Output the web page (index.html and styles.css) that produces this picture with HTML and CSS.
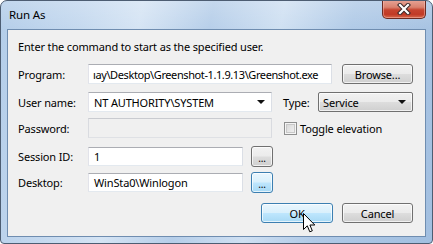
FILE: index.html
```html
<!DOCTYPE html>
<html>
<head>
<meta charset="utf-8">
<link rel="stylesheet" href="styles.css">
</head>
<body>
<div class="window">
  <div class="titlebar">
    <span class="title">Run As</span>
    <div class="close">
      <svg width="14" height="12" viewBox="0 0 14 12">
        <path d="M3 2 L11 10 M11 2 L3 10" stroke="#3a2a2a" stroke-width="4.2" stroke-linecap="square" fill="none"/>
        <path d="M3 2 L11 10 M11 2 L3 10" stroke="#ffffff" stroke-width="2.2" stroke-linecap="square" fill="none"/>
      </svg>
    </div>
  </div>
  <div class="client">
    <p class="intro">Enter the command to start as the specified user.</p>
    <div class="row r-program">
      <span class="lbl">Program:</span>
      <div class="field program"><span class="path">ıay\Desktop\Greenshot-1.1.9.13\Greenshot.exe</span></div>
      <div class="btn browse">Browse...</div>
    </div>
    <div class="row r-user">
      <span class="lbl">User name:</span>
      <div class="field combo"><span>NT AUTHORITY\SYSTEM</span><i class="arrow"></i></div>
      <span class="lbl-type">Type:</span>
      <div class="btn select"><span>Service</span><i class="arrow"></i></div>
    </div>
    <div class="row r-pass">
      <span class="lbl">Password:</span>
      <div class="field disabled"></div>
      <span class="check"></span>
      <span class="check-lbl">Toggle elevation</span>
    </div>
    <div class="row r-session">
      <span class="lbl">Session ID:</span>
      <div class="field short"><span>1</span></div>
      <div class="btn dots">...</div>
    </div>
    <div class="row r-desktop">
      <span class="lbl">Desktop:</span>
      <div class="field short"><span>WinSta0\Winlogon</span></div>
      <div class="btn dots hot">...</div>
    </div>
    <div class="row r-buttons">
      <div class="btn ok hot">OK</div>
      <div class="btn cancel">Cancel</div>
    </div>
  </div>
  <svg class="cursor" width="13" height="20" viewBox="0 0 13 20">
    <path d="M0.5 0.5 L0.5 16.5 L4.3 12.8 L6.8 18.8 L9.3 17.8 L6.9 12 L11.8 12 Z" fill="#ffffff" stroke="#000000" stroke-width="1" stroke-linejoin="miter"/>
  </svg>
</div>
</body>
</html>
```
FILE: styles.css
```css
html, body {
  margin: 0;
  padding: 0;
  background: #ffffff;
}
body {
  font-family: "Noto Sans", "Open Sans", sans-serif;
  font-size: 11px;
  letter-spacing: -0.15px;
  color: #000;
}
.window {
  position: relative;
  width: 433px;
  height: 244px;
  box-sizing: border-box;
  border: 1px solid #4d5d72;
  border-radius: 7px 7px 4px 4px;
  background:
    linear-gradient(180deg, rgba(255,255,255,0.2), rgba(255,255,255,0) 30px),
    linear-gradient(100deg, #b3cde9 0%, #c5d9ef 18%, #d5e4f4 30%, #b6cee9 45%, #cfe0f2 60%, #b0cae7 75%, #a2bfe0 100%);
  display: flex;
  flex-direction: column;
  overflow: hidden;
}
.titlebar {
  height: 28px;
  display: flex;
  align-items: center;
  padding-left: 8px;
  position: relative;
}
.title {
  font-size: 11.5px;
  color: #000;
  margin-top: -1px;
}
.close {
  position: absolute;
  top: -1px;
  right: 6px;
  width: 44px;
  height: 19px;
  box-sizing: border-box;
  border: 1px solid #6b2b22;
  border-top: none;
  border-radius: 0 0 5px 5px;
  background: linear-gradient(180deg, #e7a597 0%, #d9826f 40%, #c6442f 55%, #c13a26 80%, #d76a4d 100%);
  box-shadow: inset 0 0 0 1px rgba(255,200,190,0.45);
  display: flex;
  align-items: center;
  justify-content: center;
}
.client {
  margin: 0 6px;
  height: 208px;
  box-sizing: border-box;
  border: 1px solid #6f8db0;
  background: #f0f0f0;
  padding: 8px 12px 0 10px;
}
.intro {
  margin: 0;
  height: 17px;
  line-height: 17px;
}
.row {
  display: flex;
  align-items: center;
  height: 20px;
}
.r-program { margin-top: 9px; }
.r-user { margin-top: 8px; }
.r-pass { margin-top: 6px; }
.r-session { margin-top: 8px; height: 21px; }
.r-desktop { margin-top: 5px; height: 21px; }
.r-buttons { margin-top: 10px; justify-content: flex-end; }
.lbl {
  width: 70px;
  flex: none;
}
.field {
  box-sizing: border-box;
  height: 20px;
  background: #fff;
  border: 1px solid;
  border-color: #abadb3 #dbdfe6 #e3e9ef #e2e3ea;
  display: flex;
  align-items: center;
  padding: 0 5px;
  overflow: hidden;
  white-space: nowrap;
  flex: none;
}
.program {
  width: 244px;
  padding-left: 4px;
  padding-right: 2px;
}
.path {
  letter-spacing: -0.4px;
}
.combo {
  width: 184px;
  justify-content: space-between;
  padding-right: 6px;
}
.arrow {
  display: block;
  width: 0;
  height: 0;
  border-left: 4px solid transparent;
  border-right: 4px solid transparent;
  border-top: 4px solid #111;
}
.lbl-type {
  margin-left: 11px;
  width: 36px;
}
.btn {
  box-sizing: border-box;
  height: 20px;
  border: 1px solid #707070;
  border-radius: 3px;
  background: linear-gradient(180deg, #f2f2f2 0%, #ebebeb 48%, #dddddd 52%, #cfcfcf 100%);
  box-shadow: inset 0 0 0 1px rgba(255,255,255,0.7);
  display: flex;
  align-items: center;
  justify-content: center;
  flex: none;
}
.browse {
  width: 71px;
  margin-left: 10px;
}
.select {
  width: 95px;
  justify-content: space-between;
  padding: 0 6px 0 4px;
  border-radius: 2px;
}
.disabled {
  width: 184px;
  background: #f0f0f0;
  border-color: #c9cbd0 #d9dbe0 #dfe1e5 #d9dbe0;
}
.check {
  box-sizing: border-box;
  width: 13px;
  height: 13px;
  margin-left: 12px;
  border: 1px solid #8e8f8f;
  background: linear-gradient(135deg, #d4d4d4, #f4f4f4);
  box-shadow: inset 0 0 0 1px #f4f4f4, inset 0 0 0 2px #c8c8c8;
  flex: none;
}
.check-lbl {
  margin-left: 3px;
}
.short {
  width: 155px;
  height: 19px;
}
.dots {
  width: 22px;
  height: 21px;
  margin-left: 8px;
  font-size: 10px;
  align-items: flex-end;
  padding-bottom: 3px;
  line-height: 10px;
}
.hot {
  border-color: #3c7fb1;
  background: linear-gradient(180deg, #eaf6fd 0%, #d9f0fc 48%, #bee6fd 52%, #a7d9f5 100%);
}
.ok {
  width: 72px;
}
.cancel {
  width: 71px;
  margin-left: 9px;
}
.cursor {
  position: absolute;
  left: 302px;
  top: 212px;
}
```
